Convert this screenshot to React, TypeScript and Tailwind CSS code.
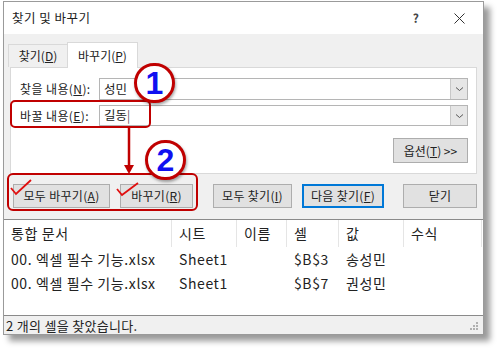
import React from "react";

const cols = [
  { name: "통합 문서", w: "w-[168px]" },
  { name: "시트", w: "w-[65px]" },
  { name: "이름", w: "w-[50px]" },
  { name: "셀", w: "w-[52px]" },
  { name: "값", w: "w-[65px]" },
  { name: "수식", w: "w-[78px]" },
];

const rows = [
  ["00. 엑셀 필수 기능.xlsx", "Sheet1", "", "$B$3", "송성민", ""],
  ["00. 엑셀 필수 기능.xlsx", "Sheet1", "", "$B$7", "권성민", ""],
];

function Chevron() {
  return (
    <div className="w-[17px] h-full border-l border-[#c8c8c8] bg-[#e6e6e6] flex items-center justify-center">
      <svg width="9" height="6" viewBox="0 0 9 6">
        <path d="M1 1.5 L4.5 4.5 L8 1.5" fill="none" stroke="#555" strokeWidth="1" />
      </svg>
    </div>
  );
}

function Btn({ children, w, blue }: { children: React.ReactNode; w: string; blue?: boolean }) {
  return (
    <div
      className={`${w} h-[24px] flex items-center justify-center bg-[#e1e1e1] text-[12px] tracking-[0.3px] text-[#222] ${
        blue ? "border border-[#0078d7] shadow-[inset_0_0_0_1px_#0078d7]" : "border border-[#adadad]"
      }`}
    >
      {children}
    </div>
  );
}

function Badge({ n, pos }: { n: string; pos: string }) {
  return (
    <div
      className={`absolute ${pos} w-[41px] h-[40px] rounded-full bg-white border-[3px] border-[#c00000] shadow-[1px_2px_3px_rgba(0,0,0,0.35)] flex items-center justify-center`}
    >
      <span className="font-['Liberation_Sans',sans-serif] font-bold text-[32px] leading-none text-[#1010f0]">
        {n}
      </span>
    </div>
  );
}

export default function App() {
  return (
    <div className="relative w-[500px] h-[350px] bg-white overflow-hidden font-['Noto_Sans_CJK_KR','Noto_Sans',sans-serif] text-[#222]">
      <div className="ml-[3px] mt-[1px] w-[481px] h-[334px] border border-[#9a9a9a] bg-[#f0f0f0] flex flex-col shadow-[6px_6px_6px_rgba(0,0,0,0.4)]">
        {/* title bar */}
        <div className="h-[32px] bg-white flex items-center pl-[8px] pr-[18px]">
          <span className="text-[12.5px] leading-none tracking-[0.5px]">찾기 및 바꾸기</span>
          <span className="ml-auto text-[12px] leading-none mr-[35px] font-bold text-[#444]">?</span>
          <svg width="11" height="11" viewBox="0 0 11 11">
            <path d="M0.5 0.5 L10.5 10.5 M10.5 0.5 L0.5 10.5" stroke="#333" strokeWidth="1" />
          </svg>
        </div>

        {/* tabs */}
        <div className="flex items-end h-[33px] pl-[4px]">
          <div className="w-[59px] h-[23px] border border-[#d9d9d9] border-r-0 border-b-0 flex items-center justify-center text-[12px] bg-[#f0f0f0]">
            찾기(<u>D</u>)
          </div>
          <div className="relative z-10 w-[71px] h-[26px] -mb-px bg-white border border-[#d9d9d9] border-b-0 flex items-center justify-center text-[12px]">
            바꾸기(<u>P</u>)
          </div>
        </div>

        {/* panel */}
        <div className="ml-[6px] w-[467px] h-[107px] bg-white border border-[#d9d9d9] flex flex-col pt-[10px] pr-[8px]">
          <div className="flex items-center h-[22px]">
            <span className="w-[88px] pl-[9px] text-[12px] tracking-[0.4px]">
              찾을 내용(<u>N</u>):
            </span>
            <div className="flex-1 h-[22px] border border-[#b5b5b5] flex items-center">
              <span className="pl-[4px] text-[12.5px] flex-1">성민</span>
              <Chevron />
            </div>
          </div>
          <div className="flex items-center h-[21px] mt-[5px]">
            <span className="w-[88px] pl-[9px] text-[12px] tracking-[0.4px]">
              바꿀 내용(<u>E</u>):
            </span>
            <div className="flex-1 h-[21px] border border-[#b5b5b5] flex items-center">
              <span className="pl-[4px] text-[12.5px] flex-1">
                길동<span className="font-light">|</span>
              </span>
              <Chevron />
            </div>
          </div>
          <div className="flex justify-end mt-[12px]">
            <div className="w-[75px] h-[25px] bg-[#e1e1e1] border border-[#adadad] flex items-center justify-center text-[12px]">
              옵션(<u>T</u>) &gt;&gt;
            </div>
          </div>
        </div>

        {/* buttons */}
        <div className="flex mt-[10px] pl-[9px]">
          <Btn w="w-[97px]">
            모두 바꾸기(<u>A</u>)
          </Btn>
          <div className="ml-[10px]">
            <Btn w="w-[73px]">
              바꾸기(<u>R</u>)
            </Btn>
          </div>
          <div className="ml-[20px]">
            <Btn w="w-[79px]">
              모두 찾기(<u>I</u>)
            </Btn>
          </div>
          <div className="ml-[10px]">
            <Btn w="w-[82px]" blue>
              다음 찾기(<u>F</u>)
            </Btn>
          </div>
          <div className="ml-[19px]">
            <Btn w="w-[74px]">닫기</Btn>
          </div>
        </div>

        {/* result list */}
        <div className="mt-[11px] h-[97px] bg-white border-t border-b border-[#8a8a8a] text-[14px] tracking-[0.6px]">
          <div className="flex h-[27px]">
            {cols.map((c) => (
              <div key={c.name} className={`${c.w} h-full flex items-center pl-[7px] border-r border-[#e5e5e5]`}>
                {c.name}
              </div>
            ))}
          </div>
          {rows.map((r, i) => (
            <div key={i} className="flex h-[24px]">
              {r.map((v, j) => (
                <div key={j} className={`${cols[j].w} flex items-center pl-[7px] whitespace-nowrap`}>
                  {v}
                </div>
              ))}
            </div>
          ))}
        </div>

        {/* status bar */}
        <div className="flex-1 flex items-center pl-[2px] relative">
          <span className="text-[13px] leading-none tracking-[0.3px]">2 개의 셀을 찾았습니다.</span>
          <svg className="absolute right-[4px] bottom-[3px]" width="9" height="9" viewBox="0 0 9 9">
            <rect x="6" y="0" width="2" height="2" fill="#b0b0b0" />
            <rect x="3" y="3" width="2" height="2" fill="#b0b0b0" />
            <rect x="6" y="3" width="2" height="2" fill="#b0b0b0" />
            <rect x="0" y="6" width="2" height="2" fill="#b0b0b0" />
            <rect x="3" y="6" width="2" height="2" fill="#b0b0b0" />
            <rect x="6" y="6" width="2" height="2" fill="#b0b0b0" />
          </svg>
        </div>
      </div>

      {/* annotations */}
      <div className="absolute left-[10px] top-[100px] w-[141px] h-[28px] rounded-[5px] border-[2.5px] border-[#c00000]" />
      <svg className="absolute left-[122px] top-[126px]" width="14" height="50" viewBox="0 0 14 50">
        <path d="M7 0 L7 42" stroke="#c00000" strokeWidth="2.5" />
        <path d="M2 39 L7 48 L12 39 Z" fill="#c00000" />
      </svg>
      <div className="absolute left-[7px] top-[173px] w-[191px] h-[38px] rounded-[6px] border-[2.5px] border-[#c00000]" />
      <svg className="absolute left-[10px] top-[179px]" width="22" height="17" viewBox="0 0 22 17">
        <path d="M1 9 L6 15 L21 1" fill="none" stroke="#e01010" strokeWidth="1.8" />
      </svg>
      <svg className="absolute left-[116px] top-[182px]" width="23" height="15" viewBox="0 0 23 15">
        <path d="M1 7 L6 13 L22 1" fill="none" stroke="#e01010" strokeWidth="1.8" />
      </svg>
      <Badge n="1" pos="left-[134px] top-[63px]" />
      <Badge n="2" pos="left-[145px] top-[140px]" />
    </div>
  );
}
